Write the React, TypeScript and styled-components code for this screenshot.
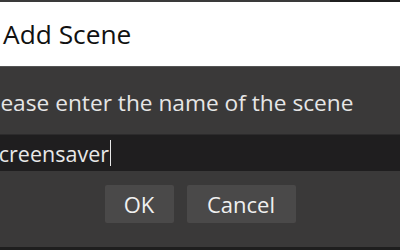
import React from "react";
import styled, { createGlobalStyle } from "styled-components";

const GlobalStyle = createGlobalStyle`
  html, body {
    margin: 0;
    padding: 0;
    background: #3a3939;
    overflow: hidden;
  }
  * {
    box-sizing: border-box;
  }
`;

const Screen = styled.div`
  width: 400px;
  height: 250px;
  overflow: hidden;
  display: flex;
  flex-direction: column;
  font-family: "Open Sans", "Noto Sans", sans-serif;
`;

const TopStrip = styled.div`
  height: 2px;
  flex-shrink: 0;
  background: linear-gradient(to right, #3a3a3a 0, #3a3a3a 330px, #1f1f1f 330px);
`;

const TitleBar = styled.div`
  height: 64px;
  flex-shrink: 0;
  background: #ffffff;
  display: flex;
  align-items: center;
  padding-left: 3px;
  font-size: 26.3px;
  color: #111111;
`;

const Body = styled.div`
  flex: 1;
  background: #3a3939;
  border-top: 1px solid #545454;
  overflow: hidden;
`;

// the dialog is wider than the captured region, so it starts left of the edge
const Dialog = styled.div`
  width: 438px;
  margin-left: -19px;
  padding-top: 22px;
  display: flex;
  flex-direction: column;
`;

const Label = styled.div`
  font-size: 22.7px;
  line-height: 27px;
  color: #e6e6e6;
  white-space: nowrap;
`;

const TextField = styled.div`
  margin-top: 18px;
  height: 37px;
  background: #1f1e1f;
  border-top: 1px solid #2c2b2c;
  display: flex;
  align-items: center;
  padding-left: 6px;
  font-size: 21.5px;
  color: #e8e8e8;
  white-space: nowrap;
`;

const Caret = styled.span`
  display: inline-block;
  width: 1px;
  height: 26px;
  margin-left: 1px;
  background: #e8e8e8;
`;

const ButtonRow = styled.div`
  margin-top: 14px;
  display: flex;
  justify-content: center;
  gap: 13px;
`;

const Button = styled.button<{ $width: number }>`
  width: ${(p) => p.$width}px;
  height: 38px;
  border: none;
  border-radius: 2px;
  background: #4a4949;
  color: #f0f0f0;
  font-family: inherit;
  font-size: 22px;
  padding: 0;
`;

const BottomStrip = styled.div`
  height: 3px;
  flex-shrink: 0;
  background: #1e1e1e;
`;

export default function App() {
  return (
    <>
      <GlobalStyle />
      <Screen>
        <TopStrip />
        <TitleBar>Add Scene</TitleBar>
        <Body>
          <Dialog>
            <Label>Please enter the name of the scene</Label>
            <TextField>
              Screensaver
              <Caret />
            </TextField>
            <ButtonRow>
              <Button $width={69}>OK</Button>
              <Button $width={109}>Cancel</Button>
            </ButtonRow>
          </Dialog>
        </Body>
        <BottomStrip />
      </Screen>
    </>
  );
}
